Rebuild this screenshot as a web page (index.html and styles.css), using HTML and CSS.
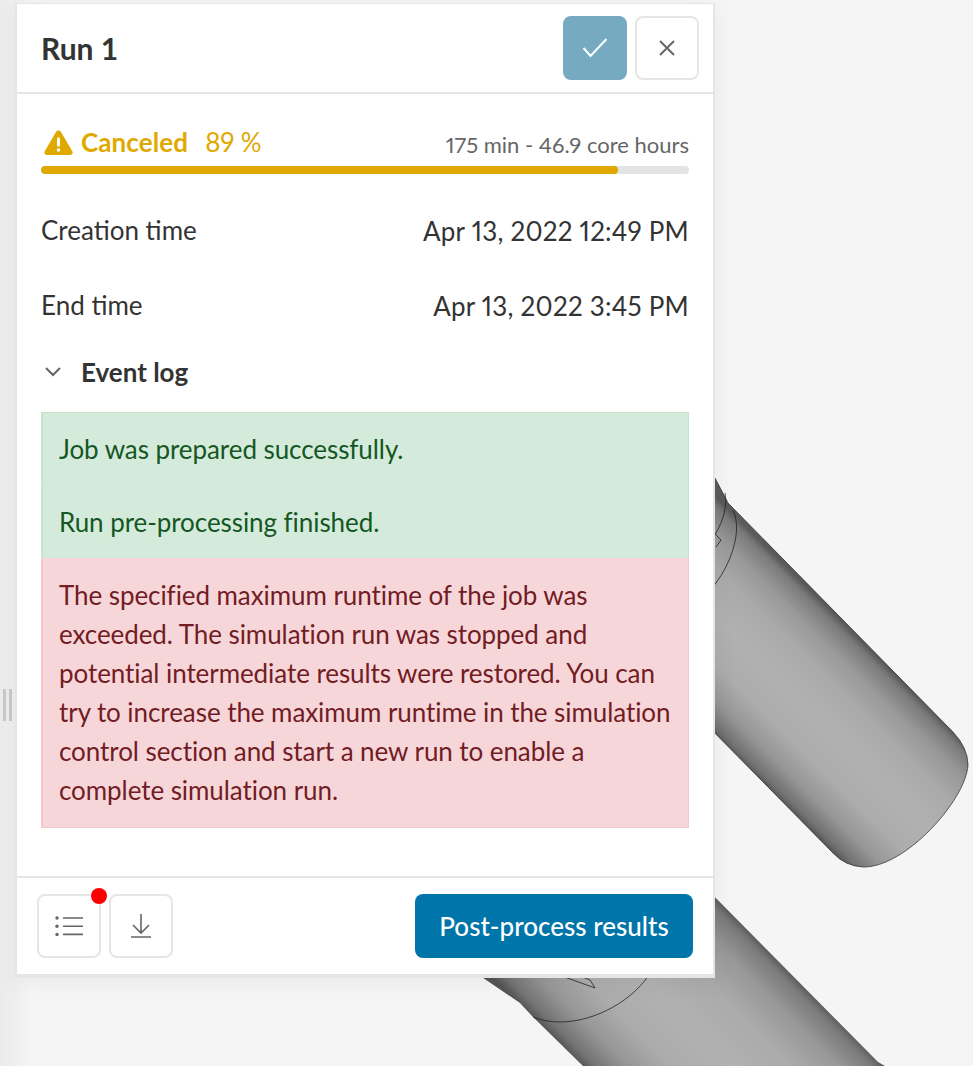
FILE: index.html
```html
<!DOCTYPE html>
<html lang="en">
<head>
<meta charset="utf-8">
<title>Run 1</title>
<link rel="stylesheet" href="styles.css">
</head>
<body>
<svg class="scene" width="973" height="1066" viewBox="0 0 973 1066" aria-hidden="true">
  <defs>
    <linearGradient id="cylA" gradientUnits="userSpaceOnUse" x1="953" y1="732" x2="833" y2="853">
      <stop offset="0" stop-color="#5a5a5a"/><stop offset=".04" stop-color="#7a7a7a"/><stop offset=".15" stop-color="#989898"/><stop offset=".3" stop-color="#aaa"/><stop offset=".5" stop-color="#b1b1b1"/><stop offset=".7" stop-color="#acacac"/><stop offset=".85" stop-color="#969696"/><stop offset=".96" stop-color="#727272"/><stop offset="1" stop-color="#555"/>
    </linearGradient>
    <linearGradient id="cylB" gradientUnits="userSpaceOnUse" x1="785" y1="967" x2="634" y2="1118">
      <stop offset="0" stop-color="#5a5a5a"/><stop offset=".04" stop-color="#7a7a7a"/><stop offset=".15" stop-color="#989898"/><stop offset=".3" stop-color="#aaa"/><stop offset=".5" stop-color="#b1b1b1"/><stop offset=".7" stop-color="#acacac"/><stop offset=".85" stop-color="#969696"/><stop offset=".96" stop-color="#727272"/><stop offset="1" stop-color="#555"/>
    </linearGradient>
  </defs>
  <path class="body-a" d="M700 465 L715 478 L728 503 L953 732 Q968 748 968 765 C966 800 905 868 863 867 Q845 866 833 853 L700 718 Z"/>
  <path class="seam" d="M725 493 Q730 520 700 556"/>
  <path class="seam" d="M733 510 C745 535 725 580 700 600"/>
  <path class="seam" d="M715 534 L721 540 L716 547"/>
  <path class="body-b" d="M470 969 L520 1003 L533 1017 L583 1066 L885 1066 L878 1062 L700 882 L600 940 Z"/>
  <path class="seam" d="M533 1017 Q545 1022 560 1022 C595 1022 635 1000 652 970"/>
  <path class="seam" d="M545 970 L595 988 L590 980 L560 968"/>
</svg>
<div class="gutter"><span class="grip"></span><span class="grip"></span></div>
<main class="panel">
  <header class="panel-head">
    <h1 class="title">Run 1</h1>
    <div class="btn-row">
      <button class="icon-btn confirm" type="button" aria-label="Confirm">
        <svg width="24" height="24" viewBox="0 0 24 24"><path class="stroke-white" d="M.5 12 L7.5 20 L23.5 3"/></svg>
      </button>
      <button class="icon-btn" type="button" aria-label="Close">
        <svg width="16" height="16" viewBox="0 0 16 16"><path class="stroke-grey" d="M1 1 L15 15 M15 1 L1 15"/></svg>
      </button>
    </div>
  </header>
  <section class="panel-body">
    <div class="status-row">
      <div class="status">
        <svg class="warn" width="29" height="25" viewBox="0 0 29 25"><path class="warn-fill" d="M14.5 0.5 C15.6 0.5 16.4 1 17 2 L28.3 21.3 C29.3 23 28 25 26 25 L3 25 C1 25 -.3 23 .7 21.3 L12 2 C12.6 1 13.4 .5 14.5 .5 Z"/><rect class="warn-mark" x="13" y="7.5" width="3" height="9" rx="1"/><circle class="warn-mark" cx="14.5" cy="20" r="1.8"/></svg>
        <strong class="status-label">Canceled</strong>
        <span class="status-pct">89 %</span>
      </div>
      <span class="status-meta">175 min - 46.9 core hours</span>
    </div>
    <div class="progress"><div class="progress-fill" style="width:89%"></div></div>
    <dl class="facts">
      <div class="fact"><dt>Creation time</dt><dd>Apr 13, 2022 12:49 PM</dd></div>
      <div class="fact"><dt>End time</dt><dd>Apr 13, 2022 3:45 PM</dd></div>
    </dl>
    <div class="log-head">
      <svg width="16" height="10" viewBox="0 0 16 10"><path class="stroke-grey" d="M1 1 L8 8 L15 1"/></svg>
      <strong class="log-title">Event log</strong>
    </div>
    <div class="log">
      <div class="log-item ok">Job was prepared successfully.</div>
      <div class="log-item ok">Run pre-processing finished.</div>
      <div class="log-item err">The specified maximum runtime of the job was exceeded. The simulation run was stopped and potential intermediate results were restored. You can try to increase the maximum runtime in the simulation control section and start a new run to enable a complete simulation run.</div>
    </div>
  </section>
  <footer class="panel-foot">
    <div class="btn-row">
      <button class="icon-btn badged" type="button" aria-label="Log">
        <svg width="28" height="20" viewBox="0 0 28 20"><path class="stroke-thin" d="M8 2 H28 M8 10.2 H28 M8 18.4 H28"/><circle class="dot" cx="2" cy="2" r="1.7"/><circle class="dot" cx="2" cy="10.2" r="1.7"/><circle class="dot" cx="2" cy="18.4" r="1.7"/></svg>
      </button>
      <button class="icon-btn" type="button" aria-label="Download">
        <svg width="22" height="24" viewBox="0 0 22 24"><path class="stroke-thin" d="M11 0 V19 M3 11 L11 19 L19 11 M1 23 H21"/></svg>
      </button>
    </div>
    <button class="primary" type="button">Post-process results</button>
  </footer>
</main>
</body>
</html>
```
FILE: styles.css
```css
* { box-sizing: border-box; }
html, body { margin: 0; padding: 0; }
body {
  width: 973px;
  height: 1066px;
  overflow: hidden;
  position: relative;
  background: linear-gradient(90deg, #ebebeb 0, #efefef 16px, #f5f5f5 30px);
  font-family: "Lato", sans-serif;
  font-variant-numeric: proportional-nums;
  color: #333;
  padding: 3px 0 0 15px;
}
.scene { position: absolute; left: 0; top: 0; }
.body-a { fill: url(#cylA); stroke: #222; stroke-width: .7; }
.body-b { fill: url(#cylB); stroke: none; }
.seam { fill: none; stroke: #222; stroke-width: .8; }
.gutter {
  position: absolute;
  left: 3px;
  top: 689px;
  display: flex;
  gap: 3px;
}
.grip { width: 3px; height: 32px; background: #c9c9c9; }
.panel {
  position: relative;
  width: 700px;
  height: 975px;
  background: #fff;
  border: 2px solid #e5e5e5;
  border-top-width: 1px;
  border-bottom-width: 4px;
  display: flex;
  flex-direction: column;
  box-shadow: 0 4px 24px rgba(0,0,0,.05);
}
.panel-head {
  height: 90px;
  flex: none;
  display: flex;
  align-items: center;
  justify-content: space-between;
  padding: 0 14px 0 24px;
  border-bottom: 2px solid #e5e5e5;
}
.title {
  margin: 0;
  font-size: 30px;
  font-weight: 700;
  font-variant-numeric: tabular-nums;
  color: #333;
}
.btn-row { display: flex; gap: 8px; }
.icon-btn {
  width: 64px;
  height: 64px;
  padding: 0;
  background: #fff;
  border: 2px solid #e6e6e6;
  border-radius: 8px;
  display: flex;
  align-items: center;
  justify-content: center;
}
.icon-btn.confirm { background: #75aac1; border-color: #75aac1; }
.badged { position: relative; }
.badged::after {
  content: "";
  position: absolute;
  right: -8px;
  top: -8px;
  width: 16px;
  height: 16px;
  border-radius: 50%;
  background: #f00;
}
.stroke-white { fill: none; stroke: #fff; stroke-width: 2; }
.stroke-grey { fill: none; stroke: #666; stroke-width: 2; }
.stroke-thin { fill: none; stroke: #666; stroke-width: 1.6; }
.dot { fill: #666; }
.panel-body { flex: 1; padding: 34px 24px 0; }
.status-row {
  display: flex;
  align-items: flex-end;
  justify-content: space-between;
  height: 33px;
  padding-bottom: 3px;
}
.status { display: flex; align-items: center; }
.warn { margin: 0 8px 0 3px; }
.warn-fill { fill: #dfa900; }
.warn-mark { fill: #fff; }
.status-label { font-size: 26px; font-weight: 700; color: #dfa900; letter-spacing: .1px; }
.status-pct { font-size: 26px; color: #dfa900; margin-left: 17px; letter-spacing: -.2px; }
.status-meta { font-size: 22px; color: #666; }
.progress {
  height: 8px;
  margin-top: 5px;
  border-radius: 4px;
  background: #e4e4e4;
  overflow: hidden;
}
.progress-fill { height: 100%; border-radius: 4px; background: #dfa900; }
.facts { margin: 0; padding-top: 29px; }
.fact {
  display: flex;
  justify-content: space-between;
  align-items: center;
  height: 75px;
  font-size: 26px;
  padding-bottom: 21px;
}
.fact dt { color: #333; }
.fact dd { margin: 0; color: #333; letter-spacing: .24px; padding-top: 2px; }
.log-head {
  display: flex;
  align-items: center;
  height: 38px;
}
.log-head svg { margin: 0 20px 0 4px; }
.log-title { font-size: 26px; color: #333; font-weight: 700; }
.log { margin-top: 21px; }
.log-item {
  font-size: 26px;
  line-height: 39px;
  letter-spacing: -.07px;
  padding: 17px 12px 17px 16px;
  border: 1px solid transparent;
  border-left-width: 2px;
}
.log-item.ok {
  background: #d4ebdb;
  border-color: #c3e6cb;
  border-bottom-color: #d4ebdb;
  color: #155724;
  height: 73px;
}
.log-item.ok + .log-item.ok { border-top-color: #d4ebdb; }
.log-item.err {
  background: #f7d6da;
  border-color: #f5c6cb;
  border-top-color: #f7d6da;
  color: #721c24;
  padding-top: 17px;
  padding-bottom: 17px;
}
.panel-foot {
  flex: none;
  height: 98px;
  border-top: 2px solid #e5e5e5;
  display: flex;
  align-items: flex-start;
  justify-content: space-between;
  padding: 16px 20px 0 20px;
}
.primary {
  width: 278px;
  height: 64px;
  border: 0;
  border-radius: 8px;
  background: #0075a9;
  color: #fff;
  font: 500 26px "Lato", sans-serif;
}
```
